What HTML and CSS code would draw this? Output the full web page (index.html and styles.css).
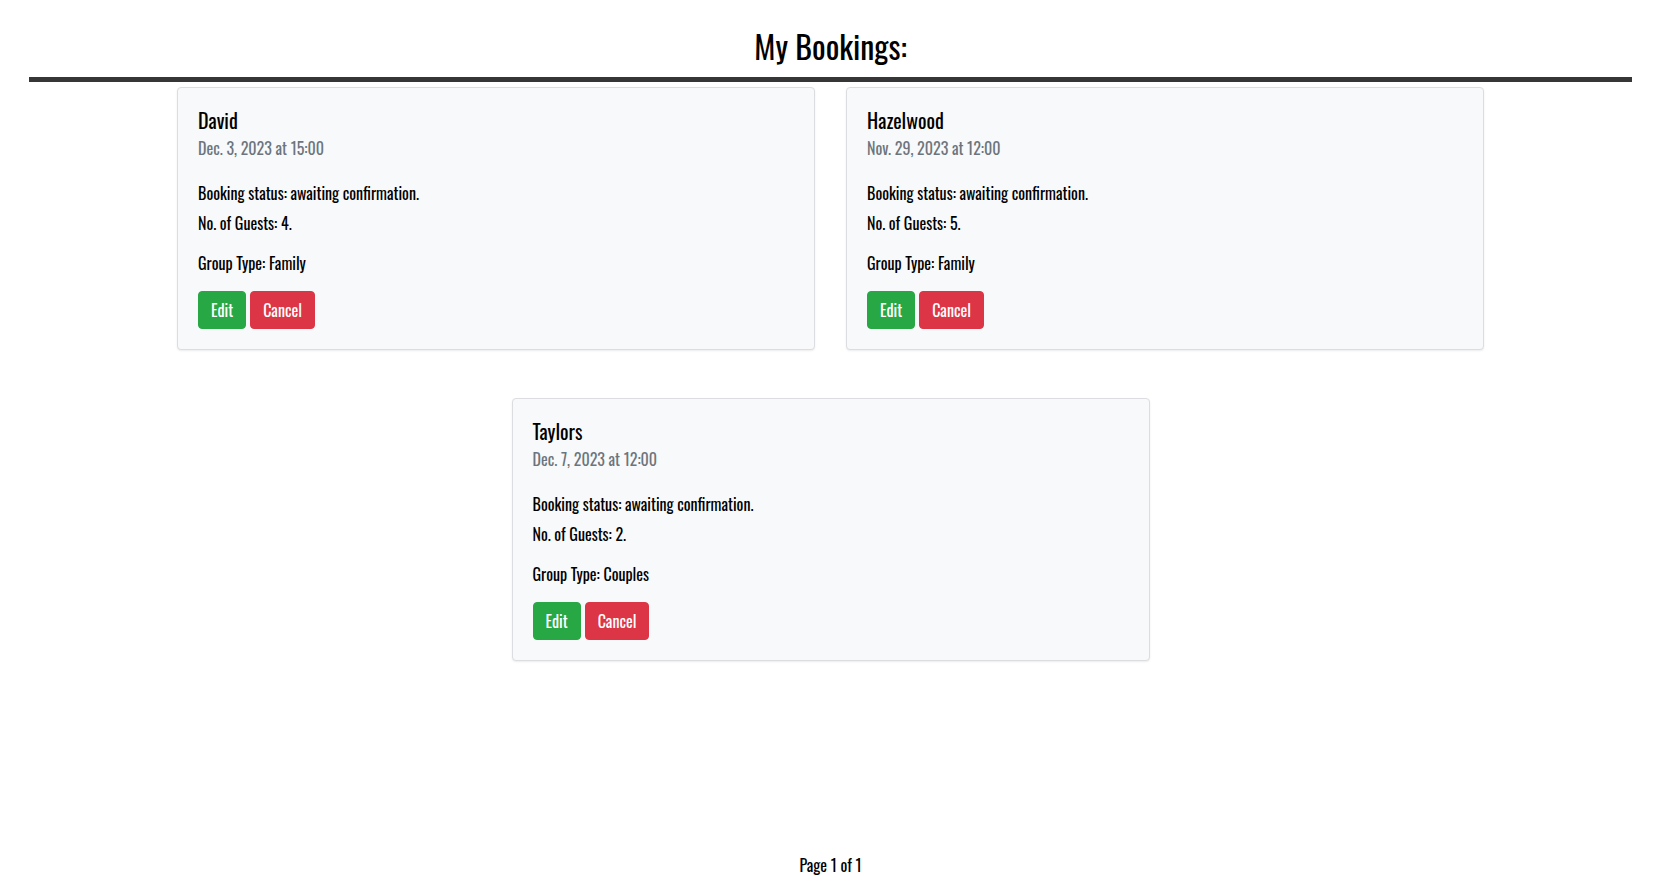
FILE: index.html
```html
<!DOCTYPE html>
<html lang="en">
<head>
<meta charset="utf-8">
<title>My Bookings</title>
<link rel="stylesheet" href="styles.css">
</head>
<body>
<main class="page">
  <h2 class="page-title">My Bookings:</h2>
  <hr class="title-rule">
  <section class="bookings">
    <article class="card">
      <h5 class="card-title">David</h5>
      <h6 class="card-subtitle">Dec. 3, 2023 at 15:00</h6>
      <p class="card-text status">Booking status: awaiting confirmation.</p>
      <p class="card-text guests">No. of Guests: 4.</p>
      <p class="card-text group">Group Type: Family</p>
      <div class="actions">
        <a class="btn btn-success" href="#">Edit</a>
        <a class="btn btn-danger" href="#">Cancel</a>
      </div>
    </article>
    <article class="card">
      <h5 class="card-title">Hazelwood</h5>
      <h6 class="card-subtitle">Nov. 29, 2023 at 12:00</h6>
      <p class="card-text status">Booking status: awaiting confirmation.</p>
      <p class="card-text guests">No. of Guests: 5.</p>
      <p class="card-text group">Group Type: Family</p>
      <div class="actions">
        <a class="btn btn-success" href="#">Edit</a>
        <a class="btn btn-danger" href="#">Cancel</a>
      </div>
    </article>
    <article class="card">
      <h5 class="card-title">Taylors</h5>
      <h6 class="card-subtitle">Dec. 7, 2023 at 12:00</h6>
      <p class="card-text status">Booking status: awaiting confirmation.</p>
      <p class="card-text guests">No. of Guests: 2.</p>
      <p class="card-text group">Group Type: Couples</p>
      <div class="actions">
        <a class="btn btn-success" href="#">Edit</a>
        <a class="btn btn-danger" href="#">Cancel</a>
      </div>
    </article>
  </section>
  <footer class="pagination">Page 1 of 1</footer>
</main>
</body>
</html>
```

FILE: styles.css
```css
html, body {
  margin: 0;
  padding: 0;
  background: #fff;
}

body {
  font-family: "Oswald", "Liberation Sans Narrow", "DejaVu Sans Condensed", "Liberation Sans", sans-serif;
  font-size: 16px;
  line-height: 24px;
  color: #000;
  padding-right: 6px;
}

.page {
  display: flex;
  flex-direction: column;
}

.page-title {
  margin: 27px 0 0;
  font-size: 32px;
  line-height: 38px;
  font-weight: 400;
  text-align: center;
}

.title-rule {
  margin: 12px 29px 0 29px;
  height: 5px;
  border: 0;
  background: #363636;
}

.bookings {
  width: 1307px;
  margin: 5px auto 0;
  display: flex;
  flex-wrap: wrap;
  justify-content: center;
  column-gap: 31px;
  row-gap: 48px;
}

.card {
  box-sizing: border-box;
  width: 638px;
  padding: 20px;
  background: #f8f9fa;
  border: 1px solid #dcdde0;
  border-radius: 4px;
  box-shadow: 0 1px 2px rgba(0, 0, 0, 0.08);
  display: flex;
  flex-direction: column;
  align-items: flex-start;
}

.card-title {
  margin: 0;
  font-size: 20px;
  line-height: 24px;
  font-weight: 400;
}

.card-subtitle {
  margin: 4px 0 0;
  font-size: 16px;
  line-height: 24px;
  font-weight: 400;
  color: #6c757d;
}

.card-text {
  margin: 0;
}

.status {
  margin-top: 21px;
}

.guests {
  margin-top: 6px;
}

.group {
  margin-top: 16px;
}

.actions {
  margin-top: 16px;
  display: flex;
  gap: 4px;
}

.btn {
  display: inline-block;
  padding: 6px 12px;
  font-size: 16px;
  line-height: 24px;
  border: 1px solid transparent;
  border-radius: 4px;
  color: #fff;
  text-decoration: none;
}

.btn-success {
  background: #28a745;
  border-color: #28a745;
}

.btn-danger {
  background: #dc3545;
  border-color: #dc3545;
}

.pagination {
  margin-top: 192px;
  text-align: center;
  font-size: 16px;
  line-height: 24px;
  font-weight: 400;
}
```
